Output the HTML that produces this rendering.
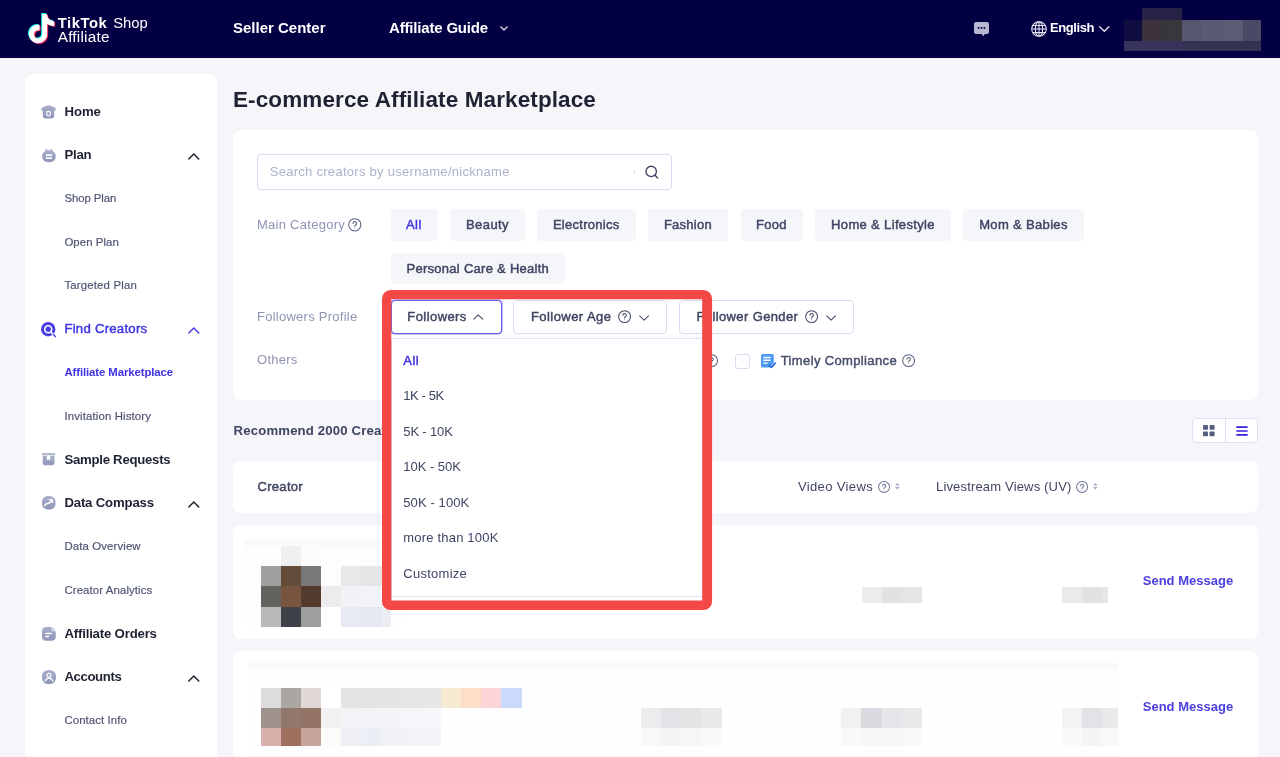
<!DOCTYPE html>
<html lang="en">
<head>
<meta charset="utf-8">
<title>E-commerce Affiliate Marketplace</title>
<style>
*{box-sizing:border-box;margin:0;padding:0}
html,body{width:1280px;height:757px;overflow:hidden}
body{background:#f5f5fa;font-family:"Liberation Sans",sans-serif;position:relative}
.a{position:absolute}
.t{position:absolute;white-space:pre;line-height:20px;height:20px}
.card{position:absolute;background:#fff;border-radius:8px}
.pill{position:absolute;height:31.3px;background:#f5f6fa;border-radius:4px}
.btn{position:absolute;height:33.5px;top:300.3px;border:1px solid #d9ddf1;border-radius:4px;background:#fff}
.m{position:absolute}
svg{position:absolute;overflow:visible}
.rec{width:200px;overflow:hidden}
</style>
</head>
<body>
<!-- ===== header ===== -->
<div class="a" id="hdr" style="left:0;top:0;width:1280px;height:58px;background:#020042"></div>
<!-- tiktok note -->
<svg style="left:28px;top:12.6px" width="27.2" height="31.1" viewBox="0.72 -0.75 22.56 25.5" preserveAspectRatio="none">
<path transform="translate(-.85,-.75)" fill="#25f4ee" d="M12.525.02c1.310-.02 2.610-.01 3.910-.02.080 1.530.630 3.090 1.750 4.170 1.120 1.110 2.700 1.620 4.240 1.790v4.030c-1.440-.05-2.890-.35-4.200-.97-.57-.26-1.100-.59-1.620-.93-.01 2.920.01 5.840-.02 8.750-.08 1.400-.54 2.790-1.350 3.940-1.310 1.920-3.580 3.170-5.910 3.210-1.430.08-2.860-.31-4.080-1.030-2.020-1.190-3.440-3.370-3.650-5.710-.02-.5-.03-1-.01-1.490.18-1.900 1.120-3.720 2.580-4.960 1.660-1.440 3.980-2.130 6.150-1.720.02 1.480-.04 2.960-.04 4.440-.99-.32-2.150-.23-3.020.37-.63.410-1.110 1.040-1.360 1.750-.21.510-.15 1.070-.14 1.610.24 1.640 1.820 3.020 3.500 2.870 1.120-.01 2.190-.66 2.770-1.610.19-.33.400-.67.410-1.060.1-1.790.06-3.570.07-5.360.01-4.030-.01-8.050.02-12.070z"/>
<path transform="translate(.85,.75)" fill="#fe2c55" d="M12.525.02c1.310-.02 2.610-.01 3.910-.02.080 1.530.630 3.090 1.750 4.170 1.120 1.110 2.700 1.620 4.240 1.790v4.030c-1.440-.05-2.890-.35-4.200-.97-.57-.26-1.100-.59-1.620-.93-.01 2.920.01 5.840-.02 8.750-.08 1.400-.54 2.790-1.350 3.940-1.310 1.920-3.580 3.170-5.910 3.210-1.430.08-2.860-.31-4.080-1.030-2.020-1.190-3.440-3.370-3.650-5.710-.02-.5-.03-1-.01-1.490.18-1.900 1.120-3.720 2.580-4.960 1.660-1.440 3.980-2.130 6.150-1.720.02 1.480-.04 2.960-.04 4.440-.99-.32-2.150-.23-3.020.37-.63.410-1.110 1.040-1.360 1.750-.21.510-.15 1.070-.14 1.610.24 1.640 1.820 3.020 3.500 2.870 1.120-.01 2.190-.66 2.770-1.610.19-.33.400-.67.410-1.060.1-1.790.06-3.570.07-5.360.01-4.030-.01-8.050.02-12.070z"/>
<path fill="#fff" d="M12.525.02c1.310-.02 2.610-.01 3.910-.02.080 1.530.630 3.090 1.750 4.170 1.120 1.110 2.700 1.620 4.240 1.790v4.030c-1.440-.05-2.890-.35-4.200-.97-.57-.26-1.100-.59-1.620-.93-.01 2.920.01 5.840-.02 8.750-.08 1.400-.54 2.790-1.350 3.940-1.310 1.920-3.580 3.170-5.910 3.210-1.430.08-2.860-.31-4.080-1.030-2.020-1.190-3.440-3.370-3.650-5.710-.02-.5-.03-1-.01-1.490.18-1.900 1.120-3.720 2.580-4.960 1.660-1.440 3.980-2.130 6.150-1.720.02 1.480-.04 2.960-.04 4.440-.99-.32-2.150-.23-3.020.37-.63.410-1.110 1.040-1.360 1.750-.21.510-.15 1.070-.14 1.610.24 1.640 1.820 3.020 3.500 2.870 1.120-.01 2.190-.66 2.770-1.610.19-.33.400-.67.410-1.060.1-1.790.06-3.570.07-5.360.01-4.030-.01-8.050.02-12.070z"/>
</svg>
<!-- affiliate guide chevron -->
<svg style="left:499.6px;top:26px" width="8" height="5" viewBox="0 0 8 5" fill="none" stroke="#e6e6f2" stroke-width="1.200" stroke-linecap="round" stroke-linejoin="round"><path d="M.7 .8 4 4 7.300 .8"/></svg>
<!-- chat -->
<svg style="left:974px;top:21.8px" width="15" height="14.400" viewBox="0 0 15 14.400"><path d="M2 0h11a2 2 0 0 1 2 2v8a2 2 0 0 1-2 2h-2.300l-1.300 2.300-1.700-2.300H2a2 2 0 0 1-2-2V2a2 2 0 0 1 2-2z" fill="#b6b7d0"/><g fill="#020042"><rect x="3.700" y="5.100" width="1.700" height="1.700" rx=".4"/><rect x="6.650" y="5.100" width="1.700" height="1.700" rx=".4"/><rect x="9.600" y="5.100" width="1.700" height="1.700" rx=".4"/></g></svg>
<!-- globe -->
<svg style="left:1030.800px;top:20.500px" width="16" height="16" viewBox="0 0 16 16" fill="none" stroke="#e9e9f5" stroke-width="1.050"><circle cx="8" cy="8" r="7.300"/><ellipse cx="8" cy="8" rx="3.700" ry="7.300"/><path d="M8 .7v14.600M.7 8h14.600M1.700 4.400h12.600M1.700 11.600h12.600"/></svg>
<!-- english chevron -->
<svg style="left:1098.800px;top:26px" width="10.600" height="6" viewBox="0 0 10.600 6" fill="none" stroke="#ececf6" stroke-width="1.300" stroke-linecap="round" stroke-linejoin="round"><path d="M.7 .8 5.300 5.200 9.900 .8"/></svg>
<!-- blurred account -->
<div class="m" style="left:1142.400px;top:8px;width:40px;height:12.500px;background:#272347"></div>
<div class="m" style="left:1123.900px;top:20.200px;width:18.500px;height:20.700px;background:#100d40"></div>
<div class="m" style="left:1142.400px;top:20.200px;width:20px;height:20.700px;background:#3b323b"></div>
<div class="m" style="left:1162.400px;top:20.200px;width:20px;height:20.700px;background:#38373b"></div>
<div class="m" style="left:1182.400px;top:20.200px;width:20px;height:20.700px;background:#56566f"></div>
<div class="m" style="left:1202.400px;top:20.200px;width:20px;height:20.700px;background:#595a73"></div>
<div class="m" style="left:1222.400px;top:20.200px;width:20.500px;height:20.700px;background:#5b5c73"></div>
<div class="m" style="left:1242.900px;top:20.200px;width:18.200px;height:20.700px;background:#494a66"></div>
<div class="m" style="left:1123.900px;top:40.500px;width:59px;height:10.700px;background:#37335a"></div>
<div class="m" style="left:1182.900px;top:40.500px;width:78.200px;height:10.700px;background:#343253"></div>

<!-- ===== sidebar ===== -->
<div class="card" id="side" style="left:25px;top:74px;width:192.3px;height:700px"></div>
<svg width="0" height="0" style="left:0;top:0"><defs><linearGradient id="g" x1="0" y1="0" x2="0" y2="1"><stop offset="0" stop-color="#aab0cb"/><stop offset="1" stop-color="#8e95b7"/></linearGradient></defs></svg>
<!-- home -->
<svg style="left:41px;top:104.800px" width="15" height="14" viewBox="0 0 15 14"><path d="M.3 4.100c0-.7.400-1.200 1-1.500L6.300.4c.8-.35 1.600-.35 2.400 0l5 2.200c.6.300 1 .8 1 1.500v.700c0 .7-.5 1.100-1.100 1.100h-.4v4.900c0 1.700-1 2.800-2.800 2.800H4.600c-1.800 0-2.800-1.100-2.800-2.800V5.900h-.4C.8 5.900.3 5.500.3 4.800z" fill="url(#g)"/><rect x="5.700" y="6.300" width="3.600" height="4.700" rx="1.700" fill="none" stroke="#fff" stroke-width="1.150"/></svg>
<!-- plan -->
<svg style="left:41.7px;top:148.5px" width="14" height="13.4" viewBox="0 0 14 13.4"><rect x="3.300" y="0" width="2" height="3" rx=".7" fill="#a9afca"/><rect x="8.300" y="0" width="2" height="3" rx=".7" fill="#a9afca"/><rect x=".1" y="1.200" width="13.700" height="12.100" rx="6" fill="url(#g)"/><rect x="3.900" y="5.300" width="6.200" height="1.700" rx=".5" fill="#fff"/><rect x="3.900" y="8.200" width="6.200" height="1.700" rx=".5" fill="#fff"/></svg>
<!-- find creators -->
<svg style="left:41px;top:321.500px" width="15.500" height="15.500" viewBox="0 0 15.500 15.500"><circle cx="7.200" cy="7.200" r="7.200" fill="#4a3fe6"/><circle cx="7.200" cy="7.200" r="3.500" fill="none" stroke="#fff" stroke-width="1.600"/><circle cx="7.200" cy="7.200" r="1.500" fill="#fff" opacity=".0"/><path d="M9.900 10 12.500 12.700" stroke="#fff" stroke-width="1.600" stroke-linecap="round"/><path d="M12.600 12.800 14.300 14.500" stroke="#4a3fe6" stroke-width="1.500" stroke-linecap="round"/></svg>
<!-- sample requests -->
<svg style="left:42px;top:453.3px" width="13.200" height="12.500" viewBox="0 0 13.200 12.500"><rect x="0" y="0" width="13.200" height="2.300" rx=".7" fill="#b3b8d1"/><path d="M.7 2.800h11.800v6.900c0 1.500-.9 2.500-2.500 2.500H3.200C1.600 12.200.7 11.200.7 9.700z" fill="url(#g)"/><path d="M4.900 2.800h3.400v4.600l-1.700-1.200-1.700 1.200z" fill="#fff"/></svg>
<!-- data compass -->
<svg style="left:41.600px;top:496.200px" width="13.500" height="13.500" viewBox="0 0 13.500 13.500"><rect x="0" y="0" width="13.500" height="13.500" rx="5.600" fill="url(#g)"/><path d="M2.600 9.600C3.300 7.600 4.300 7.400 5.600 7.500 7.200 7.600 8.300 6.700 9.900 4.500" fill="none" stroke="#fff" stroke-width="1.350" stroke-linecap="round"/><path d="M7.300 3.900 10.300 3.700 10.500 6.700" fill="none" stroke="#fff" stroke-width="1.300" stroke-linecap="round" stroke-linejoin="round"/></svg>
<!-- affiliate orders -->
<svg style="left:41.600px;top:626.600px" width="13.800" height="13.800" viewBox="0 0 13.800 13.800"><path d="M4.200 0h5.500v2.800c0 .9.500 1.400 1.400 1.400h2.700v5.400c0 2.600-1.600 4.200-4.200 4.200H4.200C1.600 13.800 0 12.200 0 9.600V4.200C0 1.600 1.600 0 4.200 0z" fill="url(#g)"/><path d="M10.400.2 13.600 3.400h-2.300c-.6 0-.9-.3-.9-.9z" fill="#b9bed6"/><rect x="3.300" y="5.800" width="6.600" height="1.500" rx=".5" fill="#fff"/><rect x="3.300" y="8.700" width="4" height="1.500" rx=".5" fill="#fff"/></svg>
<!-- accounts -->
<svg style="left:41.500px;top:669.700px" width="14" height="14" viewBox="0 0 14 14"><rect x="0" y="0" width="14" height="14" rx="6.300" fill="url(#g)"/><circle cx="7" cy="5.300" r="2" fill="none" stroke="#fff" stroke-width="1.200"/><path d="M3.200 11.200c.4-2 1.900-3.100 3.800-3.100s3.400 1.100 3.800 3.100" fill="none" stroke="#fff" stroke-width="1.200" stroke-linecap="round"/></svg>
<!-- chevrons -->
<svg style="left:187.900px;top:153.200px" width="11.600" height="6.800" viewBox="0 0 11.600 6.800" fill="none" stroke="#1f2233" stroke-width="1.500" stroke-linecap="round" stroke-linejoin="round"><path d="M.8 6 5.800 1 10.800 6"/></svg>
<svg style="left:187.900px;top:326.700px" width="11.600" height="6.800" viewBox="0 0 11.600 6.800" fill="none" stroke="#4a3fe6" stroke-width="1.500" stroke-linecap="round" stroke-linejoin="round"><path d="M.8 6 5.800 1 10.800 6"/></svg>
<svg style="left:187.900px;top:500.700px" width="11.600" height="6.800" viewBox="0 0 11.600 6.800" fill="none" stroke="#1f2233" stroke-width="1.500" stroke-linecap="round" stroke-linejoin="round"><path d="M.8 6 5.800 1 10.800 6"/></svg>
<svg style="left:187.900px;top:674.700px" width="11.600" height="6.800" viewBox="0 0 11.600 6.800" fill="none" stroke="#1f2233" stroke-width="1.500" stroke-linecap="round" stroke-linejoin="round"><path d="M.8 6 5.800 1 10.800 6"/></svg>

<!-- ===== main cards ===== -->
<div class="card" style="left:233px;top:130px;width:1025px;height:270px"></div>
<div class="card" style="left:233px;top:461px;width:1025px;height:51.5px"></div>
<div class="card" style="left:233px;top:524.5px;width:1025px;height:114px"></div>
<div class="card" style="left:233px;top:651px;width:1025px;height:130px"></div>
<!-- search box -->
<div class="a" style="left:257px;top:154px;width:415px;height:35.5px;border:1px solid #d6dbf0;border-radius:4px;background:#fff"></div>
<div class="a" style="left:634.4px;top:169.5px;width:1px;height:5px;background:#dfe2f0"></div>
<svg style="left:644.5px;top:165px" width="14" height="14" viewBox="0 0 14 14" fill="none" stroke="#3f4563" stroke-width="1.35" stroke-linecap="round"><circle cx="6.2" cy="6.4" r="5.2"/><path d="M10.2 10.6 12.6 13"/></svg>
<!-- help icon main category -->
<svg style="left:348.3px;top:218.3px" width="13.6" height="13.6" viewBox="0 0 14 14" fill="none" stroke="#5a6080" stroke-width="1.1" stroke-linecap="round"><circle cx="7" cy="7" r="6.3"/><path d="M5.2 5.6a1.85 1.85 0 1 1 2.7 1.6c-.6.35-.9.7-.9 1.3"/><circle cx="7" cy="10.3" r=".45" fill="#5a6080" stroke="none"/></svg>
<!-- pills -->
<div class="pill" style="left:390.5px;top:209.4px;width:47.4px"></div>
<div class="pill" style="left:449.6px;top:209.4px;width:75.3px"></div>
<div class="pill" style="left:536.6px;top:209.4px;width:99.6px"></div>
<div class="pill" style="left:648px;top:209.4px;width:80px"></div>
<div class="pill" style="left:740.5px;top:209.4px;width:62.4px"></div>
<div class="pill" style="left:815.1px;top:209.4px;width:135.9px"></div>
<div class="pill" style="left:963.2px;top:209.4px;width:120.7px"></div>
<div class="pill" style="left:390.5px;top:252.9px;width:174.6px"></div>
<!-- filter buttons -->
<div class="btn" style="left:391px;width:110.7px;border:1px solid #6a61f2;box-shadow:0 0 0 .6px rgba(106,97,242,.75)"></div>
<div class="btn" style="left:513.4px;width:153.6px"></div>
<div class="btn" style="left:679px;width:174.6px"></div>
<svg style="left:473px;top:313.6px" width="10.4" height="6" viewBox="0 0 10.4 6" fill="none" stroke="#4d5372" stroke-width="1.15" stroke-linecap="round" stroke-linejoin="round"><path d="M.7 5.2 5.2 .8 9.7 5.2"/></svg>
<svg style="left:618.2px;top:310.4px" width="13.2" height="13.2" viewBox="0 0 14 14" fill="none" stroke="#3f4563" stroke-width="1.1" stroke-linecap="round"><circle cx="7" cy="7" r="6.3"/><path d="M5.2 5.6a1.85 1.85 0 1 1 2.7 1.6c-.6.35-.9.7-.9 1.3"/><circle cx="7" cy="10.3" r=".45" fill="#3f4563" stroke="none"/></svg>
<svg style="left:638.6px;top:314.6px" width="10.2" height="6" viewBox="0 0 10.4 6" fill="none" stroke="#4d5372" stroke-width="1.15" stroke-linecap="round" stroke-linejoin="round"><path d="M.7 .8 5.2 5.2 9.7 .8"/></svg>
<svg style="left:805px;top:310.4px" width="13.2" height="13.2" viewBox="0 0 14 14" fill="none" stroke="#3f4563" stroke-width="1.1" stroke-linecap="round"><circle cx="7" cy="7" r="6.3"/><path d="M5.2 5.6a1.85 1.85 0 1 1 2.7 1.6c-.6.35-.9.7-.9 1.3"/><circle cx="7" cy="10.3" r=".45" fill="#3f4563" stroke="none"/></svg>
<svg style="left:825.6px;top:314.6px" width="10.2" height="6" viewBox="0 0 10.4 6" fill="none" stroke="#4d5372" stroke-width="1.15" stroke-linecap="round" stroke-linejoin="round"><path d="M.7 .8 5.2 5.2 9.7 .8"/></svg>
<!-- others row -->
<svg style="left:705px;top:353.8px" width="13.2" height="13.2" viewBox="0 0 14 14" fill="none" stroke="#5a6080" stroke-width="1.1" stroke-linecap="round"><circle cx="7" cy="7" r="6.3"/><path d="M5.2 5.6a1.85 1.85 0 1 1 2.7 1.6c-.6.35-.9.7-.9 1.3"/><circle cx="7" cy="10.3" r=".45" fill="#5a6080" stroke="none"/></svg>
<div class="a" style="left:735px;top:353.8px;width:15.4px;height:15.4px;border:1px solid #d6dbf0;border-radius:3px;background:#fff"></div>
<svg style="left:761px;top:353.6px" width="15" height="15" viewBox="0 0 15 15"><path d="M1.6 0h9.6c.9 0 1.6.7 1.6 1.6v7.2L9 13.6H1.600c-.9 0-1.600-.7-1.600-1.600V1.600C0 .7.700 0 1.600 0z" fill="#4c9bf5"/><path d="M2.800 3.500h6.400M2.800 6.300h6.400M2.800 9.100h3.400" stroke="#fff" stroke-width="1.4" stroke-linecap="round"/><path d="M8.300 11.300l2.100 2.100 3.900-4.300" fill="none" stroke="#2f6fe0" stroke-width="1.7" stroke-linecap="round" stroke-linejoin="round"/></svg>
<svg style="left:902px;top:353.8px" width="13.2" height="13.2" viewBox="0 0 14 14" fill="none" stroke="#5a6080" stroke-width="1.1" stroke-linecap="round"><circle cx="7" cy="7" r="6.3"/><path d="M5.2 5.6a1.85 1.85 0 1 1 2.7 1.6c-.6.35-.9.7-.9 1.3"/><circle cx="7" cy="10.3" r=".45" fill="#5a6080" stroke="none"/></svg>
<!-- view toggle -->
<div class="a" style="left:1192.3px;top:417.6px;width:65.6px;height:25.3px;border:1px solid #dde1f3;border-radius:4px;background:#fff"></div>
<div class="a" style="left:1224.8px;top:418px;width:1px;height:24.5px;background:#dde1f3"></div>
<svg style="left:1203.1px;top:424.8px" width="11.6" height="11.2" viewBox="0 0 11.6 11.2" fill="#565f80"><rect x="0" y="0" width="5" height="4.800" rx=".8"/><rect x="6.600" y="0" width="5" height="4.800" rx=".8"/><rect x="0" y="6.400" width="5" height="4.800" rx=".8"/><rect x="6.600" y="6.400" width="5" height="4.800" rx=".8"/></svg>
<svg style="left:1235.5px;top:425.9px" width="12" height="10" viewBox="0 0 12 10" stroke="#3320e0" stroke-width="1.600" stroke-linecap="round"><path d="M.9 1.100h10.200M.9 5h10.200M.9 8.900h10.200"/></svg>
<!-- table header icons -->
<svg style="left:877.8px;top:480.8px" width="12.2" height="12.2" viewBox="0 0 14 14" fill="none" stroke="#6b7296" stroke-width="1.150" stroke-linecap="round"><circle cx="7" cy="7" r="6.300"/><path d="M5.200 5.600a1.850 1.850 0 1 1 2.700 1.600c-.6.350-.9.700-.9 1.300"/><circle cx="7" cy="10.300" r=".5" fill="#5a6080" stroke="none"/></svg>
<svg style="left:895px;top:483.400px" width="4.600" height="6.600" viewBox="0 0 4.600 6.600" fill="#a3a8c4"><path d="M2.300 0 4.600 2.600H0z"/><path d="M2.300 6.600 4.600 4H0z"/></svg>
<svg style="left:1076px;top:480.800px" width="12.200" height="12.200" viewBox="0 0 14 14" fill="none" stroke="#6b7296" stroke-width="1.150" stroke-linecap="round"><circle cx="7" cy="7" r="6.300"/><path d="M5.200 5.600a1.850 1.850 0 1 1 2.700 1.600c-.6.350-.9.700-.9 1.300"/><circle cx="7" cy="10.300" r=".5" fill="#5a6080" stroke="none"/></svg>
<svg style="left:1093px;top:483.400px" width="4.600" height="6.600" viewBox="0 0 4.600 6.600" fill="#a3a8c4"><path d="M2.300 0 4.600 2.600H0z"/><path d="M2.300 6.600 4.600 4H0z"/></svg>

<div class="m" style="left:243.0px;top:539.4px;width:160.0px;height:7.0px;background:#fafafa"></div>
<div class="m" style="left:243.0px;top:546.4px;width:160.0px;height:80.0px;background:#fefefe"></div>
<div class="m" style="left:260.7px;top:546.4px;width:20.5px;height:20.3px;background:#fefefe"></div>
<div class="m" style="left:280.7px;top:546.4px;width:20.5px;height:20.3px;background:#f0f0f0"></div>
<div class="m" style="left:300.7px;top:546.4px;width:20.5px;height:20.3px;background:#fcfcfc"></div>
<div class="m" style="left:320.7px;top:546.4px;width:20.5px;height:20.3px;background:#fdfdfd"></div>
<div class="m" style="left:340.7px;top:546.4px;width:20.5px;height:20.3px;background:#fdfdfd"></div>
<div class="m" style="left:360.7px;top:546.4px;width:20.5px;height:20.3px;background:#fdfdfd"></div>
<div class="m" style="left:380.7px;top:546.4px;width:10.0px;height:20.3px;background:#fdfdfd"></div>
<div class="m" style="left:260.7px;top:566.3px;width:20.5px;height:20.5px;background:#9e9fa1"></div>
<div class="m" style="left:280.7px;top:566.3px;width:20.5px;height:20.5px;background:#644c3a"></div>
<div class="m" style="left:300.7px;top:566.3px;width:20.5px;height:20.5px;background:#7a7878"></div>
<div class="m" style="left:320.7px;top:566.3px;width:20.5px;height:20.5px;background:#fdfdfd"></div>
<div class="m" style="left:340.7px;top:566.3px;width:20.5px;height:20.5px;background:#e8e8e8"></div>
<div class="m" style="left:360.7px;top:566.3px;width:20.5px;height:20.5px;background:#e6e6e6"></div>
<div class="m" style="left:380.7px;top:566.3px;width:10.0px;height:20.5px;background:#e6e6e6"></div>
<div class="m" style="left:260.7px;top:586.4px;width:20.5px;height:20.6px;background:#64625f"></div>
<div class="m" style="left:280.7px;top:586.4px;width:20.5px;height:20.6px;background:#78553e"></div>
<div class="m" style="left:300.7px;top:586.4px;width:20.5px;height:20.6px;background:#523a2c"></div>
<div class="m" style="left:320.7px;top:586.4px;width:20.5px;height:20.6px;background:#ececec"></div>
<div class="m" style="left:340.7px;top:586.4px;width:20.5px;height:20.6px;background:#f1f2f6"></div>
<div class="m" style="left:360.7px;top:586.4px;width:20.5px;height:20.6px;background:#f3f4f8"></div>
<div class="m" style="left:380.7px;top:586.4px;width:10.0px;height:20.6px;background:#f3f4f8"></div>
<div class="m" style="left:260.7px;top:606.6px;width:20.5px;height:20.1px;background:#b9babc"></div>
<div class="m" style="left:280.7px;top:606.6px;width:20.5px;height:20.1px;background:#3e4147"></div>
<div class="m" style="left:300.7px;top:606.6px;width:20.5px;height:20.1px;background:#9e9e9e"></div>
<div class="m" style="left:320.7px;top:606.6px;width:20.5px;height:20.1px;background:#ffffff"></div>
<div class="m" style="left:340.7px;top:606.6px;width:20.5px;height:20.1px;background:#e8eaf2"></div>
<div class="m" style="left:360.7px;top:606.6px;width:20.5px;height:20.1px;background:#e6e9f1"></div>
<div class="m" style="left:380.7px;top:606.6px;width:10.0px;height:20.1px;background:#eceef4"></div>
<div class="m" style="left:862.0px;top:586.6px;width:20.6px;height:16.3px;background:#ebecee"></div>
<div class="m" style="left:882.0px;top:586.6px;width:20.6px;height:16.3px;background:#e1e2e4"></div>
<div class="m" style="left:902.2px;top:586.6px;width:19.7px;height:16.3px;background:#e4e5e7"></div>
<div class="m" style="left:1062.2px;top:586.6px;width:20.5px;height:16.3px;background:#e9eaec"></div>
<div class="m" style="left:1082.2px;top:586.6px;width:20.5px;height:16.3px;background:#e1e2e4"></div>
<div class="m" style="left:1102.2px;top:586.6px;width:5.6px;height:16.3px;background:#e6e7e9"></div>
<div class="m" style="left:249.0px;top:663.4px;width:868.7px;height:4.2px;background:#f9f9fb"></div>
<div class="m" style="left:249.0px;top:667.6px;width:868.7px;height:89.4px;background:#fefefe"></div>
<div class="m" style="left:260.5px;top:687.5px;width:20.5px;height:20.6px;background:#dcdcdc"></div>
<div class="m" style="left:280.5px;top:687.5px;width:20.5px;height:20.6px;background:#aca6a3"></div>
<div class="m" style="left:300.5px;top:687.5px;width:20.5px;height:20.6px;background:#e0d8d5"></div>
<div class="m" style="left:320.5px;top:687.5px;width:20.5px;height:20.6px;background:#ffffff"></div>
<div class="m" style="left:340.5px;top:687.5px;width:20.5px;height:20.6px;background:#e4e4e4"></div>
<div class="m" style="left:360.5px;top:687.5px;width:20.5px;height:20.6px;background:#e3e3e3"></div>
<div class="m" style="left:380.5px;top:687.5px;width:20.5px;height:20.6px;background:#e4e4e4"></div>
<div class="m" style="left:400.5px;top:687.5px;width:20.5px;height:20.6px;background:#e5e5e5"></div>
<div class="m" style="left:420.5px;top:687.5px;width:20.5px;height:20.6px;background:#e6e6e6"></div>
<div class="m" style="left:440.8px;top:687.5px;width:20.5px;height:20.6px;background:#f7ead2"></div>
<div class="m" style="left:460.9px;top:687.5px;width:20.5px;height:20.6px;background:#fddfc8"></div>
<div class="m" style="left:481.0px;top:687.5px;width:20.5px;height:20.6px;background:#fdd5d8"></div>
<div class="m" style="left:501.0px;top:687.5px;width:20.5px;height:20.6px;background:#c9dafc"></div>
<div class="m" style="left:260.5px;top:707.8px;width:20.5px;height:20.5px;background:#a0928f"></div>
<div class="m" style="left:280.5px;top:707.8px;width:20.5px;height:20.5px;background:#92786c"></div>
<div class="m" style="left:300.5px;top:707.8px;width:20.5px;height:20.5px;background:#957468"></div>
<div class="m" style="left:320.5px;top:707.8px;width:20.5px;height:20.5px;background:#f1f1f1"></div>
<div class="m" style="left:340.5px;top:707.8px;width:20.5px;height:20.5px;background:#f2f3f6"></div>
<div class="m" style="left:360.5px;top:707.8px;width:20.5px;height:20.5px;background:#f3f4f7"></div>
<div class="m" style="left:380.5px;top:707.8px;width:20.5px;height:20.5px;background:#f4f5f8"></div>
<div class="m" style="left:400.5px;top:707.8px;width:20.5px;height:20.5px;background:#f5f6f9"></div>
<div class="m" style="left:420.5px;top:707.8px;width:20.5px;height:20.5px;background:#f6f7fa"></div>
<div class="m" style="left:260.5px;top:728.0px;width:20.5px;height:18.0px;background:#d9b0ab"></div>
<div class="m" style="left:280.5px;top:728.0px;width:20.5px;height:18.0px;background:#a16f5e"></div>
<div class="m" style="left:300.5px;top:728.0px;width:20.5px;height:18.0px;background:#c7a39e"></div>
<div class="m" style="left:320.5px;top:728.0px;width:20.5px;height:18.0px;background:#fdfafa"></div>
<div class="m" style="left:340.5px;top:728.0px;width:20.5px;height:18.0px;background:#eef0f6"></div>
<div class="m" style="left:360.5px;top:728.0px;width:20.5px;height:18.0px;background:#eceef5"></div>
<div class="m" style="left:380.5px;top:728.0px;width:20.5px;height:18.0px;background:#f0f2f7"></div>
<div class="m" style="left:400.5px;top:728.0px;width:20.5px;height:18.0px;background:#f1f3f8"></div>
<div class="m" style="left:420.5px;top:728.0px;width:20.5px;height:18.0px;background:#f3f4f9"></div>
<div class="m" style="left:641.2px;top:707.7px;width:20.6px;height:20.2px;background:#ebecee"></div>
<div class="m" style="left:641.2px;top:727.6px;width:20.6px;height:18.3px;background:#f8f8f9"></div>
<div class="m" style="left:661.2px;top:707.7px;width:20.6px;height:20.2px;background:#e2e3e6"></div>
<div class="m" style="left:661.2px;top:727.6px;width:20.6px;height:18.3px;background:#f5f5f6"></div>
<div class="m" style="left:681.3px;top:707.7px;width:20.6px;height:20.2px;background:#e3e4e6"></div>
<div class="m" style="left:681.3px;top:727.6px;width:20.6px;height:18.3px;background:#f6f6f7"></div>
<div class="m" style="left:701.4px;top:707.7px;width:20.6px;height:20.2px;background:#e8e9eb"></div>
<div class="m" style="left:701.4px;top:727.6px;width:20.6px;height:18.3px;background:#fafafa"></div>
<div class="m" style="left:841.4px;top:707.7px;width:20.6px;height:20.2px;background:#f1f1f2"></div>
<div class="m" style="left:841.4px;top:727.6px;width:20.6px;height:18.3px;background:#f9f9fa"></div>
<div class="m" style="left:861.4px;top:707.7px;width:20.6px;height:20.2px;background:#d9dbe0"></div>
<div class="m" style="left:861.4px;top:727.6px;width:20.6px;height:18.3px;background:#f6f6f7"></div>
<div class="m" style="left:881.5px;top:707.7px;width:20.6px;height:20.2px;background:#e5e6e9"></div>
<div class="m" style="left:881.5px;top:727.6px;width:20.6px;height:18.3px;background:#f7f7f8"></div>
<div class="m" style="left:901.5px;top:707.7px;width:20.6px;height:20.2px;background:#e8e9eb"></div>
<div class="m" style="left:901.5px;top:727.6px;width:20.6px;height:18.3px;background:#f8f8f9"></div>
<div class="m" style="left:1062.0px;top:707.7px;width:20.6px;height:20.2px;background:#f3f3f4"></div>
<div class="m" style="left:1062.0px;top:727.6px;width:20.6px;height:18.3px;background:#fafafa"></div>
<div class="m" style="left:1082.0px;top:707.7px;width:20.6px;height:20.2px;background:#e2e3e6"></div>
<div class="m" style="left:1082.0px;top:727.6px;width:20.6px;height:18.3px;background:#f5f5f6"></div>
<div class="m" style="left:1102.1px;top:707.7px;width:16.3px;height:20.2px;background:#e8e9eb"></div>
<div class="m" style="left:1102.1px;top:727.6px;width:16.3px;height:18.3px;background:#f8f8f9"></div>
<div id="tx" style="position:absolute;left:0;top:0;width:1280px;height:757px;will-change:transform">
<div class="t " style="left:57.7px;top:12.62px;font-size:14.8px;color:#fff;font-weight:700;letter-spacing:0.545px;">TikTok</div>
<div class="t " style="left:113.2px;top:12.62px;font-size:14.8px;color:#fff;letter-spacing:0.009px;">Shop</div>
<div class="t " style="left:57.7px;top:27.03px;font-size:15.4px;color:#fff;letter-spacing:0.200px;">Affiliate</div>
<div class="t " style="left:233.0px;top:17.97px;font-size:15px;color:#fff;font-weight:700;">Seller Center</div>
<div class="t " style="left:389.0px;top:17.97px;font-size:15px;color:#fff;font-weight:700;letter-spacing:-0.179px;">Affiliate Guide</div>
<div class="t " style="left:1050.0px;top:18.35px;font-size:13px;color:#fff;font-weight:700;letter-spacing:-0.422px;">English</div>
<div class="t " style="left:64.4px;top:101.95px;font-size:13.2px;color:#1f2233;font-weight:700;letter-spacing:-0.035px;">Home</div>
<div class="t " style="left:64.4px;top:145.15px;font-size:13.2px;color:#1f2233;font-weight:700;letter-spacing:-0.215px;">Plan</div>
<div class="t " style="left:64.4px;top:188.13px;font-size:11.4px;color:#4d5372;-webkit-text-stroke:.18px #4d5372;letter-spacing:-0.064px;">Shop Plan</div>
<div class="t " style="left:64.4px;top:231.63px;font-size:11.4px;color:#4d5372;-webkit-text-stroke:.18px #4d5372;letter-spacing:0.075px;">Open Plan</div>
<div class="t " style="left:64.4px;top:275.13px;font-size:11.4px;color:#4d5372;-webkit-text-stroke:.18px #4d5372;letter-spacing:0.177px;">Targeted Plan</div>
<div class="t " style="left:64.4px;top:318.65px;font-size:13.2px;color:#4034e4;-webkit-text-stroke:.45px #4034e4;letter-spacing:0.239px;">Find Creators</div>
<div class="t " style="left:64.4px;top:362.13px;font-size:11.4px;color:#4034e4;font-weight:700;letter-spacing:-0.104px;">Affiliate Marketplace</div>
<div class="t " style="left:64.4px;top:405.63px;font-size:11.4px;color:#4d5372;-webkit-text-stroke:.18px #4d5372;letter-spacing:0.139px;">Invitation History</div>
<div class="t " style="left:64.4px;top:449.75px;font-size:13.2px;color:#1f2233;font-weight:700;letter-spacing:-0.263px;">Sample Requests</div>
<div class="t " style="left:64.4px;top:492.65px;font-size:13.2px;color:#1f2233;font-weight:700;letter-spacing:-0.177px;">Data Compass</div>
<div class="t " style="left:64.4px;top:536.13px;font-size:11.4px;color:#4d5372;-webkit-text-stroke:.18px #4d5372;letter-spacing:0.123px;">Data Overview</div>
<div class="t " style="left:64.4px;top:579.63px;font-size:11.4px;color:#4d5372;-webkit-text-stroke:.18px #4d5372;letter-spacing:0.111px;">Creator Analytics</div>
<div class="t " style="left:64.4px;top:623.55px;font-size:13.2px;color:#1f2233;font-weight:700;letter-spacing:-0.180px;">Affiliate Orders</div>
<div class="t " style="left:64.4px;top:667.05px;font-size:13.2px;color:#1f2233;font-weight:700;letter-spacing:-0.387px;">Accounts</div>
<div class="t " style="left:64.4px;top:710.13px;font-size:11.4px;color:#4d5372;-webkit-text-stroke:.18px #4d5372;letter-spacing:0.098px;">Contact Info</div>
<div class="t " style="left:233.0px;top:89.56px;font-size:22.5px;color:#1f2233;font-weight:700;letter-spacing:0.115px;">E-commerce Affiliate Marketplace</div>
<div class="t " style="left:269.7px;top:161.75px;font-size:13px;color:#adb3cc;letter-spacing:0.284px;">Search creators by username/nickname</div>
<div class="t " style="left:257.0px;top:215.15px;font-size:13px;color:#8d94b4;letter-spacing:0.266px;">Main Category</div>
<div class="t " style="left:406.0px;top:215.15px;font-size:13px;color:#4034e4;-webkit-text-stroke:.45px #4034e4;letter-spacing:0.416px;">All</div>
<div class="t " style="left:466.0px;top:215.15px;font-size:13px;color:#3f4563;-webkit-text-stroke:.45px #3f4563;letter-spacing:0.419px;">Beauty</div>
<div class="t " style="left:552.9px;top:215.15px;font-size:13px;color:#3f4563;-webkit-text-stroke:.45px #3f4563;letter-spacing:0.284px;">Electronics</div>
<div class="t " style="left:663.9px;top:215.15px;font-size:13px;color:#3f4563;-webkit-text-stroke:.45px #3f4563;letter-spacing:0.250px;">Fashion</div>
<div class="t " style="left:756.0px;top:215.15px;font-size:13px;color:#3f4563;-webkit-text-stroke:.45px #3f4563;letter-spacing:0.290px;">Food</div>
<div class="t " style="left:831.1px;top:215.15px;font-size:13px;color:#3f4563;-webkit-text-stroke:.45px #3f4563;letter-spacing:0.346px;">Home &amp; Lifestyle</div>
<div class="t " style="left:979.2px;top:215.15px;font-size:13px;color:#3f4563;-webkit-text-stroke:.45px #3f4563;letter-spacing:0.338px;">Mom &amp; Babies</div>
<div class="t " style="left:406.5px;top:258.75px;font-size:13px;color:#3f4563;-webkit-text-stroke:.45px #3f4563;letter-spacing:0.274px;">Personal Care &amp; Health</div>
<div class="t " style="left:257.0px;top:306.85px;font-size:13px;color:#8d94b4;letter-spacing:0.259px;">Followers Profile</div>
<div class="t " style="left:257.0px;top:349.75px;font-size:13px;color:#8d94b4;letter-spacing:0.264px;">Others</div>
<div class="t " style="left:407.3px;top:307.15px;font-size:13px;color:#3f4563;-webkit-text-stroke:.45px #3f4563;letter-spacing:0.431px;">Followers</div>
<div class="t " style="left:530.9px;top:307.15px;font-size:13px;color:#3f4563;-webkit-text-stroke:.45px #3f4563;letter-spacing:0.454px;">Follower Age</div>
<div class="t " style="left:696.5px;top:307.15px;font-size:13px;color:#3f4563;-webkit-text-stroke:.45px #3f4563;letter-spacing:0.379px;">Follower Gender</div>
<div class="t " style="left:780.8px;top:351.15px;font-size:13px;color:#484e6d;-webkit-text-stroke:.45px #484e6d;letter-spacing:0.361px;">Timely Compliance</div>
<div class="t rec" style="left:233.6px;top:420.55px;font-size:13.2px;color:#3f4563;font-weight:700;letter-spacing:0.140px;">Recommend 2000 Creators</div>
<div class="t " style="left:257.5px;top:477.05px;font-size:13px;color:#3f4563;-webkit-text-stroke:.45px #3f4563;letter-spacing:0.306px;">Creator</div>
<div class="t " style="left:797.9px;top:477.05px;font-size:13px;color:#3f4563;letter-spacing:0.375px;">Video Views</div>
<div class="t " style="left:936.0px;top:477.05px;font-size:13px;color:#3f4563;letter-spacing:0.168px;">Livestream Views (UV)</div>
<div class="t " style="left:1142.7px;top:571.05px;font-size:13px;color:#4a3fe0;font-weight:700;letter-spacing:0.023px;">Send Message</div>
<div class="t " style="left:1142.7px;top:697.45px;font-size:13px;color:#4a3fe0;font-weight:700;letter-spacing:0.023px;">Send Message</div>
</div>
<!-- ===== dropdown ===== -->
<div class="a" id="dd" style="left:391px;top:337.6px;width:314px;height:264px;background:#fff;border:1px solid #dde1f3;border-bottom:0;border-radius:2px;box-shadow:0 2px 10px rgba(30,35,90,.07)"></div>
<div class="a" style="left:392px;top:596px;width:312px;height:1px;background:#dfe4f5"></div>
<div id="tx2" style="position:absolute;left:0;top:0;width:1280px;height:757px;will-change:transform">
<div class="t dd" style="left:403.3px;top:350.55px;font-size:13px;color:#4034e4;-webkit-text-stroke:.45px #4034e4;letter-spacing:0.416px;">All</div>
<div class="t dd" style="left:403.3px;top:385.95px;font-size:13px;color:#3f4563;letter-spacing:-0.423px;">1K - 5K</div>
<div class="t dd" style="left:403.3px;top:422.05px;font-size:13px;color:#3f4563;letter-spacing:-0.149px;">5K - 10K</div>
<div class="t dd" style="left:403.3px;top:456.95px;font-size:13px;color:#3f4563;letter-spacing:-0.036px;">10K - 50K</div>
<div class="t dd" style="left:403.3px;top:493.05px;font-size:13px;color:#3f4563;letter-spacing:0.095px;">50K - 100K</div>
<div class="t dd" style="left:403.3px;top:528.15px;font-size:13px;color:#3f4563;letter-spacing:0.192px;">more than 100K</div>
<div class="t dd" style="left:403.3px;top:563.65px;font-size:13px;color:#3f4563;letter-spacing:0.264px;">Customize</div>
</div>
<!-- ===== red annotation ===== -->
<svg id="red" style="left:381.7px;top:289.5px" width="330.10" height="320.10" viewBox="0 0 330.10 320.10"><path fill="#f44846" fill-rule="evenodd" d="M8.70 0H321.40A8.7 8.7 0 0 1 330.10 8.70V311.40A8.7 8.7 0 0 1 321.40 320.10H8.70A8.7 8.7 0 0 1 0 311.40V8.70A8.7 8.7 0 0 1 8.70 0ZM9.35 9.35V310.55H320.20V9.35Z"/></svg>
</body>
</html>
